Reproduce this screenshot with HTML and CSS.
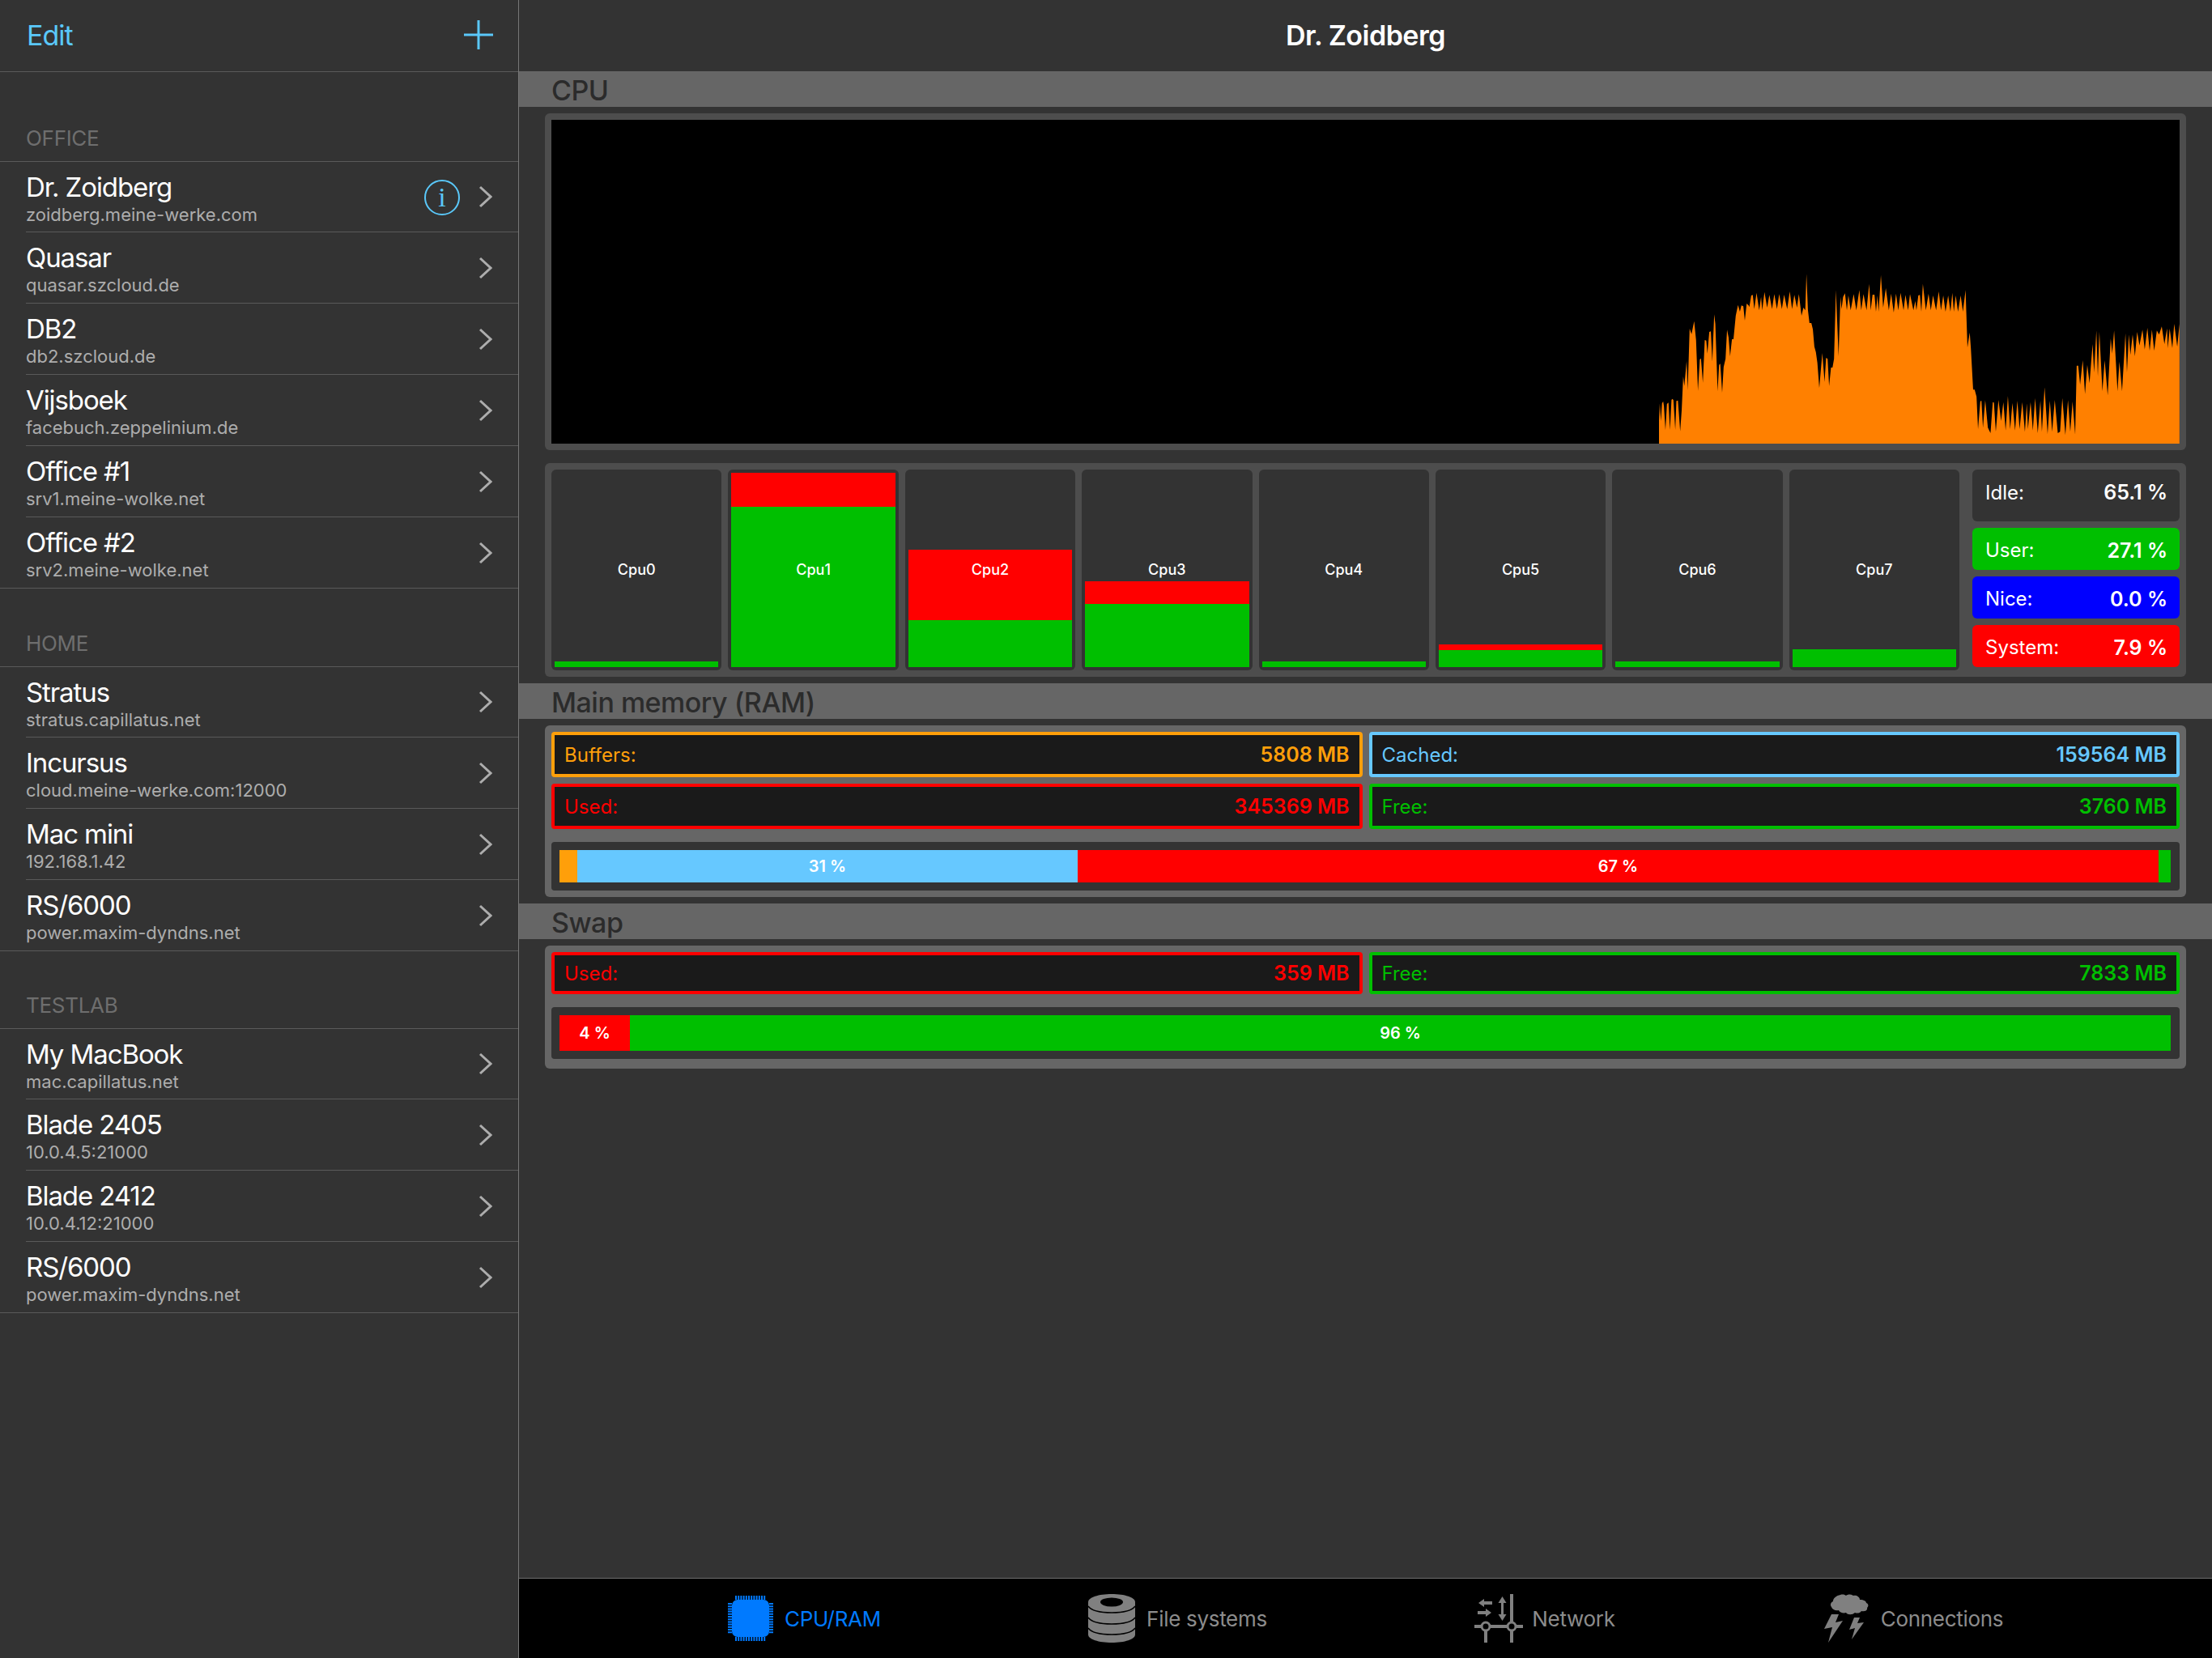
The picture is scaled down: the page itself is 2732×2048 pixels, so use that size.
FILE: index.html
```html
<!DOCTYPE html>
<html lang="en">
<head>
<meta charset="utf-8">
<title>Dr. Zoidberg</title>
<link rel="stylesheet" href="styles.css">
</head>
<body>
<div class="app">
  <aside class="sidebar">
    <header class="side-nav">
      <span class="edit">Edit</span>
      <svg class="plus" width="36" height="36" viewBox="0 0 36 36"><path d="M18 0V36M0 18H36"/></svg>
    </header>

    <h2 class="group-title first">OFFICE</h2>
    <ul class="rows">
      <li class="row"><div class="row-text"><span class="name">Dr. Zoidberg</span><span class="host">zoidberg.meine-werke.com</span></div><span class="info">i</span><svg class="chev" width="18" height="28" viewBox="0 0 18 28"><path d="M3 2L16 14L3 26"/></svg></li>
      <li class="row"><div class="row-text"><span class="name">Quasar</span><span class="host">quasar.szcloud.de</span></div><svg class="chev" width="18" height="28" viewBox="0 0 18 28"><path d="M3 2L16 14L3 26"/></svg></li>
      <li class="row"><div class="row-text"><span class="name">DB2</span><span class="host">db2.szcloud.de</span></div><svg class="chev" width="18" height="28" viewBox="0 0 18 28"><path d="M3 2L16 14L3 26"/></svg></li>
      <li class="row"><div class="row-text"><span class="name">Vijsboek</span><span class="host">facebuch.zeppelinium.de</span></div><svg class="chev" width="18" height="28" viewBox="0 0 18 28"><path d="M3 2L16 14L3 26"/></svg></li>
      <li class="row"><div class="row-text"><span class="name">Office #1</span><span class="host">srv1.meine-wolke.net</span></div><svg class="chev" width="18" height="28" viewBox="0 0 18 28"><path d="M3 2L16 14L3 26"/></svg></li>
      <li class="row"><div class="row-text"><span class="name">Office #2</span><span class="host">srv2.meine-wolke.net</span></div><svg class="chev" width="18" height="28" viewBox="0 0 18 28"><path d="M3 2L16 14L3 26"/></svg></li>
    </ul>

    <h2 class="group-title home">HOME</h2>
    <ul class="rows">
      <li class="row"><div class="row-text"><span class="name">Stratus</span><span class="host">stratus.capillatus.net</span></div><svg class="chev" width="18" height="28" viewBox="0 0 18 28"><path d="M3 2L16 14L3 26"/></svg></li>
      <li class="row"><div class="row-text"><span class="name">Incursus</span><span class="host">cloud.meine-werke.com:12000</span></div><svg class="chev" width="18" height="28" viewBox="0 0 18 28"><path d="M3 2L16 14L3 26"/></svg></li>
      <li class="row"><div class="row-text"><span class="name">Mac mini</span><span class="host">192.168.1.42</span></div><svg class="chev" width="18" height="28" viewBox="0 0 18 28"><path d="M3 2L16 14L3 26"/></svg></li>
      <li class="row"><div class="row-text"><span class="name">RS/6000</span><span class="host">power.maxim-dyndns.net</span></div><svg class="chev" width="18" height="28" viewBox="0 0 18 28"><path d="M3 2L16 14L3 26"/></svg></li>
    </ul>

    <h2 class="group-title">TESTLAB</h2>
    <ul class="rows">
      <li class="row"><div class="row-text"><span class="name">My MacBook</span><span class="host">mac.capillatus.net</span></div><svg class="chev" width="18" height="28" viewBox="0 0 18 28"><path d="M3 2L16 14L3 26"/></svg></li>
      <li class="row"><div class="row-text"><span class="name">Blade 2405</span><span class="host">10.0.4.5:21000</span></div><svg class="chev" width="18" height="28" viewBox="0 0 18 28"><path d="M3 2L16 14L3 26"/></svg></li>
      <li class="row"><div class="row-text"><span class="name">Blade 2412</span><span class="host">10.0.4.12:21000</span></div><svg class="chev" width="18" height="28" viewBox="0 0 18 28"><path d="M3 2L16 14L3 26"/></svg></li>
      <li class="row"><div class="row-text"><span class="name">RS/6000</span><span class="host">power.maxim-dyndns.net</span></div><svg class="chev" width="18" height="28" viewBox="0 0 18 28"><path d="M3 2L16 14L3 26"/></svg></li>
    </ul>
  </aside>

  <main class="main">
    <header class="main-nav">Dr. Zoidberg</header>
    <div class="content">
      <h2 class="bar">CPU</h2>
      <section class="panel dark chart-panel">
        <svg class="chart" width="2011" height="400" viewBox="0 0 2011 400">
          <g transform="translate(1319 172) scale(0.46685 0.33333)">
            <polygon fill="#ff8000" points="105,684 105,600 107,535 110,600 113,535 116,527 118,545 122,634 126,537 130,532 134,632 138,522 140,518 143,522 148,632 151,526 155,524 161,638 165,560 169,435 172,470 178,378 181,485 186,258 191,278 198,230 203,300 208,488 213,372 216,368 221,458 226,300 230,302 233,350 238,270 242,268 246,380 251,205 254,240 260,490 264,392 267,388 272,495 276,400 281,370 285,262 289,290 293,360 298,297 302,297 308,210 314,170 319,195 323,172 328,175 332,228 337,165 342,172 344,178 349,135 353,133 357,185 363,125 370,190 375,140 378,190 384,122 391,180 397,133 404,185 410,130 417,185 423,130 430,185 436,132 444,185 451,120 457,185 463,133 470,180 475,130 482,210 487,180 492,190 495,55 499,190 503,237 508,237 512,260 516,325 520,345 524,385 529,478 537,348 543,455 547,366 551,370 555,470 560,402 564,402 568,370 573,115 580,360 585,140 588,185 592,140 597,127 602,190 606,135 612,190 620,130 627,190 635,115 640,190 646,130 654,190 661,92 665,190 670,132 675,132 679,195 683,135 686,195 692,60 698,180 705,108 713,190 719,128 726,198 732,128 738,190 744,125 752,190 757,133 764,190 769,130 778,190 783,155 786,190 791,135 795,133 799,195 803,92 811,190 818,128 824,190 830,135 838,190 845,120 851,190 857,135 863,195 870,135 876,195 881,125 885,195 890,135 896,195 903,135 909,195 916,115 921,328 927,272 930,330 936,484 940,484 945,510 949,630 955,527 958,525 962,625 968,523 975,625 982,645 988,530 991,532 996,640 1003,522 1010,600 1016,530 1022,635 1028,508 1034,630 1040,533 1047,635 1053,525 1059,630 1066,530 1073,640 1078,535 1081,630 1088,530 1094,635 1100,515 1107,645 1114,525 1118,640 1125,475 1133,648 1139,525 1145,640 1152,522 1160,645 1166,640 1172,515 1180,652 1187,523 1193,640 1199,528 1206,650 1210,395 1214,395 1219,465 1226,375 1232,500 1238,392 1244,460 1252,315 1256,420 1262,265 1266,435 1270,270 1278,490 1284,375 1292,505 1300,295 1304,350 1309,265 1318,490 1323,380 1330,490 1339,275 1343,420 1348,280 1352,355 1358,280 1364,360 1370,270 1376,320 1384,262 1390,335 1397,255 1403,340 1409,262 1415,340 1422,265 1428,280 1435,250 1442,315 1449,257 1451,330 1456,258 1463,330 1468,240 1476,325 1482,240 1482,684"/>
          </g>
        </svg>
      </section>
      <section class="panel dark cores-panel">
        <div class="core"><div class="sys" style="height:0"></div><div class="usr" style="height:7px"></div><span class="core-label">Cpu0</span></div>
        <div class="core"><div class="sys" style="height:42px"></div><div class="usr" style="height:198px"></div><span class="core-label">Cpu1</span></div>
        <div class="core"><div class="sys" style="height:87px"></div><div class="usr" style="height:58px"></div><span class="core-label">Cpu2</span></div>
        <div class="core"><div class="sys" style="height:28px"></div><div class="usr" style="height:78px"></div><span class="core-label">Cpu3</span></div>
        <div class="core"><div class="sys" style="height:0"></div><div class="usr" style="height:7px"></div><span class="core-label">Cpu4</span></div>
        <div class="core"><div class="sys" style="height:7px"></div><div class="usr" style="height:21px"></div><span class="core-label">Cpu5</span></div>
        <div class="core"><div class="sys" style="height:0"></div><div class="usr" style="height:7px"></div><span class="core-label">Cpu6</span></div>
        <div class="core"><div class="sys" style="height:0"></div><div class="usr" style="height:22px"></div><span class="core-label">Cpu7</span></div>
        <div class="totals">
          <div class="total idle"><span>Idle:</span><b>65.1 %</b></div>
          <div class="total user"><span>User:</span><b>27.1 %</b></div>
          <div class="total nice"><span>Nice:</span><b>0.0 %</b></div>
          <div class="total system"><span>System:</span><b>7.9 %</b></div>
        </div>
      </section>

      <h2 class="bar">Main memory (RAM)</h2>
      <section class="panel light ram-panel">
        <div class="stats">
          <div class="stat orange"><span>Buffers:</span><b>5808 MB</b></div>
          <div class="stat blue"><span>Cached:</span><b>159564 MB</b></div>
          <div class="stat red"><span>Used:</span><b>345369 MB</b></div>
          <div class="stat green"><span>Free:</span><b>3760 MB</b></div>
        </div>
        <div class="meter ram-meter">
          <div class="seg s-orange" style="width:22px"></div>
          <div class="seg s-blue" style="width:618px">31 %</div>
          <div class="seg s-red" style="width:1335px">67 %</div>
          <div class="seg s-green" style="width:15px"></div>
        </div>
      </section>

      <h2 class="bar">Swap</h2>
      <section class="panel light swap-panel">
        <div class="stats">
          <div class="stat red"><span>Used:</span><b>359 MB</b></div>
          <div class="stat green"><span>Free:</span><b>7833 MB</b></div>
        </div>
        <div class="meter swap-meter">
          <div class="seg s-red" style="width:87px">4 %</div>
          <div class="seg s-green" style="width:1903px">96 %</div>
        </div>
      </section>
    </div>

    <nav class="tabs">
      <div class="tab active">
        <svg width="56" height="56" viewBox="0 0 56 56"><rect x="5" y="5" width="46" height="46" rx="7" fill="#007aff"/><path d="M9 2.500H47M9 53.500H47M2.500 9V47M53.500 9V47" fill="none" stroke="#007aff" stroke-width="5" stroke-dasharray="2 1.200"/></svg>
        <span>CPU/RAM</span>
      </div>
      <div class="tab files">
        <svg width="58" height="60" viewBox="0 0 58 60"><path d="M0 10C0 4 13 0 29 0S58 4 58 10V50C58 56 45 60 29 60S0 56 0 50Z" fill="#808080"/><ellipse cx="29" cy="10" rx="14" ry="5.500" fill="#000"/><path d="M0 16C4 22 16 24 29 24S54 22 58 16M0 30C4 36 16 38 29 38S54 36 58 30M0 43C4 49 16 51 29 51" transform="translate(0 -1)" fill="none" stroke="#000" stroke-width="1.500"/><path d="M29 50C42 50 54 48 58 42" fill="none" stroke="#000" stroke-width="1.500"/></svg>
        <span>File systems</span>
      </div>
      <div class="tab network">
        <svg width="60" height="60" viewBox="0 0 60 60" fill="none" stroke="#808080"><path d="M0 40H9M19 40H41M51 40H60M14 45V60M46 60V45M46 35V0" stroke-width="4"/><circle cx="14" cy="40" r="5" stroke-width="3"/><circle cx="46" cy="40" r="5" stroke-width="3"/><path d="M34.500 9V25" stroke-width="3"/><path d="M34.500 3L39.500 11H29.500ZM34.500 33L39.500 25H29.500ZM5 11L12 6V16ZM21 23L14 18V28Z" fill="#808080" stroke="none"/><path d="M11 11H22M4 23H15" stroke-width="4"/></svg>
        <span>Network</span>
      </div>
      <div class="tab">
        <svg width="56" height="60" viewBox="0 0 56 60"><path d="M20 1C23 0 26 1 27 2C29 0 34 0 36 2C39 1 44 3 44 7C49 7 52 9 52 11C55 12 55 15 53 17C54 20 50 22 46 21C44 24 40 24 38 23C35 26 29 26 27 23C24 24 19 23 18 20C14 21 10 19 9 16C7 14 8 10 11 9C11 5 15 2 20 1Z" fill="#808080"/><path d="M9 25H18L14 35L23 33L5 60L10 41L0 43ZM37 29H44L41 36L49 35L34 56L38 42L31 44Z" fill="#808080"/></svg>
        <span>Connections</span>
      </div>
    </nav>
  </main>
</div>
</body>
</html>
```

FILE: styles.css
```css
* { box-sizing: border-box; }
html, body { margin: 0; padding: 0; }
body {
  width: 2732px;
  height: 2048px;
  background: #333333;
  font-family: Inter, "Noto Sans", sans-serif;
  color: #fff;
  overflow: hidden;
}
.app { display: flex; height: 2048px; }

/* sidebar */
.sidebar {
  width: 641px;
  flex: none;
  border-right: 1px solid #777;
}
.side-nav {
  height: 89px;
  display: flex;
  align-items: center;
  justify-content: space-between;
  padding: 0 31px 2px 33px;
  border-bottom: 1px solid #5a5a5a;
}
.edit { font-size: 34px; color: #5ac8fa; letter-spacing: -1px; }
.plus { stroke: #5ac8fa; stroke-width: 3; fill: none; }
.group-title {
  margin: 0;
  height: 96px;
  padding: 0 0 13px 32px;
  display: flex;
  align-items: flex-end;
  font-size: 26px;
  font-weight: 400;
  color: #6e6e6e;
  letter-spacing: -0.3px;
  border-bottom: 1px solid #5a5a5a;
}
.group-title.first { height: 111px; }
.group-title.home { height: 97px; }
.rows { list-style: none; margin: 0; padding: 0; border-bottom: 1px solid #5a5a5a; }
.row {
  height: 88px;
  margin-left: 32px;
  padding-right: 32px;
  display: flex;
  align-items: center;
  border-bottom: 1px solid #5a5a5a;
}
.row:first-child { height: 87px; }
.row:last-child { border-bottom: 0; height: 87px; }
.row-text { flex: 1; display: flex; flex-direction: column; padding-top: 3px; }
.name { font-size: 33px; line-height: 40px; letter-spacing: -1.1px; }
.host { font-size: 22px; line-height: 28px; color: #adadad; letter-spacing: 0; }
.chev { flex: none; margin-left: 22px; fill: none; stroke: #adadad; stroke-width: 3; }
.info {
  flex: none;
  width: 44px;
  height: 44px;
  margin-bottom: -1px;
  border: 2px solid #5ac8fa;
  border-radius: 50%;
  display: flex;
  align-items: center;
  justify-content: center;
  font-family: "Liberation Serif", serif;
  font-size: 34px;
  color: #5ac8fa;
}

/* main */
.main { flex: 1; display: flex; flex-direction: column; min-width: 0; }
.main-nav {
  height: 88px;
  flex: none;
  display: flex;
  align-items: center;
  justify-content: center;
  padding-bottom: 2px;
  font-size: 34px;
  font-weight: 600;
  letter-spacing: -0.5px;
}
.content { flex: 1; }
.bar {
  margin: 0;
  height: 44px;
  padding: 2px 0 0 40px;
  background: #666666;
  color: #2b2b2b;
  font-size: 34px;
  font-weight: 500;
  line-height: 44px;
  letter-spacing: -0.5px;
}
.panel { margin: 8px 32px 8px 32px; border-radius: 6px; padding: 8px; }
.panel.dark { background: #4d4d4d; }
.panel.light { background: #666666; }
.chart-panel { height: 416px; margin-bottom: 16px; }
.chart { display: block; background: #000; }
.cores-panel { height: 264px; display: flex; gap: 8px; }
.core {
  position: relative;
  flex: 1;
  min-width: 0;
  background: #333;
  border-radius: 6px;
  padding: 4px;
  display: flex;
  flex-direction: column;
  justify-content: flex-end;
}
.sys { background: #ff0000; }
.usr { background: #00bf00; }
.core-label {
  position: absolute;
  left: 0;
  right: 0;
  top: 113px;
  text-align: center;
  font-size: 18px;
  line-height: 22px;
  font-weight: 500;
}
.totals { width: 256px; flex: none; margin-left: 8px; display: flex; flex-direction: column; gap: 8px; }
.total {
  height: 52px;
  border-radius: 6px;
  padding: 3px 15px 0 16px;
  display: flex;
  align-items: center;
  justify-content: space-between;
  font-size: 24px;
}
.total b { font-weight: 600; font-size: 25px; }
.total.idle { height: 64px; background: #333; padding: 0 15px 8px 16px; }
.total.user { background: #00bf00; }
.total.nice { background: #0000ff; }
.total.system { background: #ff0000; }
.stats { display: grid; grid-template-columns: 1fr 1fr; gap: 8px; }
.stat {
  border: 4px solid;
  border-radius: 4px;
  background: #1a1a1a;
  padding: 0 12px;
  display: flex;
  align-items: center;
  justify-content: space-between;
  font-size: 24px;
}
.stat b { font-weight: 600; font-size: 25px; }
.ram-panel .stat { height: 56px; }
.swap-panel .stat { height: 52px; }
.swap-panel { padding-bottom: 12px; }
.orange { color: #ff9f0a; border-color: #ff9f0a; }
.blue { color: #66c8ff; border-color: #66c8ff; }
.red { color: #ff0000; border-color: #ff0000; }
.green { color: #00bf00; border-color: #00bf00; }
.meter {
  margin-top: 16px;
  background: #333;
  border-radius: 4px;
  padding: 10px;
  display: flex;
  font-size: 20px;
  font-weight: 600;
}
.ram-meter { height: 60px; }
.swap-meter { height: 64px; }
.seg { display: flex; align-items: center; justify-content: center; flex: none; }
.s-orange { background: #ff9f0a; }
.s-blue { background: #66c8ff; }
.s-red { background: #ff0000; }
.s-green { background: #00bf00; }

/* tabs */
.tabs {
  height: 99px;
  flex: none;
  background: #000;
  border-top: 1px solid #6e6e6e;
  display: grid;
  grid-template-columns: repeat(4, 1fr);
  padding: 0 140px 0 123px;
}
.tab {
  display: flex;
  align-items: center;
  justify-content: center;
  gap: 14px;
  font-size: 26px;
  letter-spacing: -0.3px;
  color: #8c8c8c;
}
.tab.active { color: #007aff; padding-left: 2px; }
.tab.files { padding-left: 10px; }
.tab.network { padding-left: 3px; gap: 11px; }
```
